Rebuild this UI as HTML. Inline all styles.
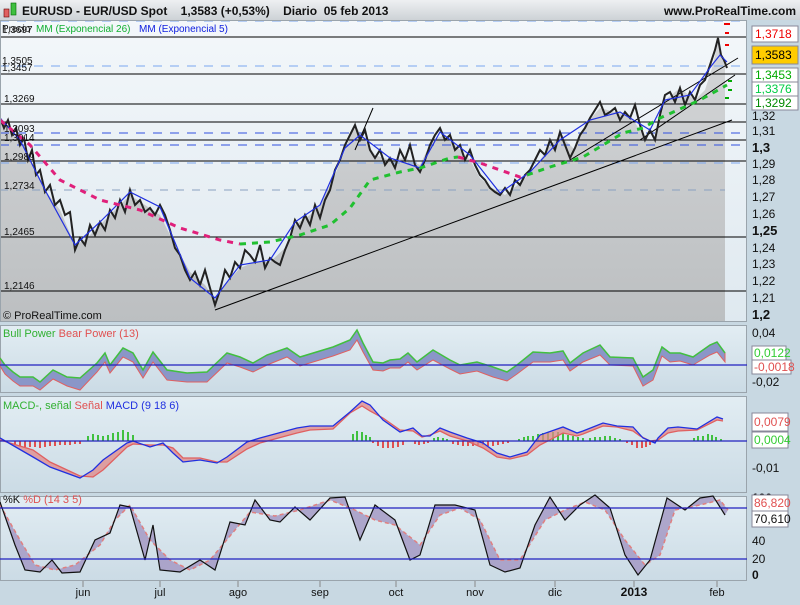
<!DOCTYPE html>
<html><head><meta charset="utf-8"><style>
body{margin:0;width:800px;height:600px;overflow:hidden;background:#c8d8e2;font-family:"Liberation Sans",sans-serif;}
svg text{font-family:"Liberation Sans",sans-serif;}
</style></head><body>
<svg width="800" height="600" xmlns="http://www.w3.org/2000/svg">
<defs>
<linearGradient id="hd" x1="0" y1="0" x2="0" y2="1"><stop offset="0" stop-color="#eef0f2"/><stop offset="1" stop-color="#cdd2d6"/></linearGradient>
<linearGradient id="pb" x1="0" y1="0" x2="0" y2="1"><stop offset="0" stop-color="#f3f7fa"/><stop offset="1" stop-color="#dfe9f0"/></linearGradient>
<linearGradient id="ib" x1="0" y1="0" x2="0" y2="1"><stop offset="0" stop-color="#e2edf3"/><stop offset="1" stop-color="#cbdbe5"/></linearGradient>
<linearGradient id="gf" x1="0" y1="0" x2="0" y2="1"><stop offset="0" stop-color="#d4d6d8"/><stop offset="1" stop-color="#bcbfc1"/></linearGradient>
</defs>
<rect width="800" height="600" fill="#c8d8e2"/>
<rect x="0" y="0" width="800" height="20" fill="url(#hd)"/>
<rect x="4" y="9" width="5" height="8" fill="#e06060" stroke="#600" stroke-width="0.6"/>
<rect x="11" y="3" width="5" height="12" fill="#40c040" stroke="#060" stroke-width="0.6"/>
<text x="22" y="15" font-size="12" font-weight="bold" fill="#111">EURUSD - EUR/USD Spot &#160;&#160; 1,3583 (+0,53%) &#160;&#160; Diario &#160;05 feb 2013</text>
<text x="796" y="15" font-size="12" font-weight="bold" fill="#111" text-anchor="end">www.ProRealTime.com</text>
<!-- main panel -->
<rect x="0" y="20" width="747" height="302" fill="url(#pb)"/>
<path d="M0,118 L8,125 20,140 30,160 45,190 60,210 75,245 85,240 100,225 115,210 130,195 145,205 160,215 175,245 190,272 205,285 215,300 225,285 240,268 255,262 270,262 285,248 295,225 310,215 320,205 335,175 345,150 355,125 365,140 375,155 390,160 405,158 420,165 432,140 445,135 460,150 470,160 480,178 492,188 505,195 520,183 535,168 548,148 560,135 575,150 585,125 600,108 615,112 630,115 645,138 655,140 665,100 680,88 695,100 705,90 712,68 718,42 722,55 725,68 L725,322 L0,322 Z" fill="url(#gf)"/>
<g stroke="#3050e0" stroke-width="1" stroke-dasharray="9,8">
<line x1="0" y1="133" x2="747" y2="133"/><line x1="0" y1="145" x2="747" y2="145"/>
</g>
<g stroke="#7aa6f0" stroke-width="1" stroke-dasharray="9,8">
<line x1="0" y1="21" x2="747" y2="21"/><line x1="0" y1="66" x2="747" y2="66"/><line x1="0" y1="163" x2="747" y2="163"/>
</g>
<g stroke="#000" stroke-width="1">
<line x1="0" y1="37" x2="747" y2="37"/><line x1="0" y1="74" x2="747" y2="74"/><line x1="0" y1="104" x2="747" y2="104"/><line x1="0" y1="122" x2="747" y2="122"/><line x1="0" y1="140" x2="747" y2="140"/><line x1="0" y1="161" x2="747" y2="161"/><line x1="0" y1="237" x2="747" y2="237"/><line x1="0" y1="291" x2="747" y2="291"/>
<line x1="215" y1="310" x2="732" y2="120"/><line x1="570" y1="160" x2="738" y2="58"/><line x1="640" y1="140" x2="735" y2="75"/><line x1="355" y1="150" x2="373" y2="108"/>
</g>
<g stroke="#8aa0c0" stroke-width="1" stroke-dasharray="8,8"><line x1="0" y1="190" x2="725" y2="190"/></g>
<path d="M0,118 L4,128 8,120 12,135 16,128 20,145 24,138 28,160 32,150 36,175 40,170 45,192 50,185 55,205 60,200 65,215 70,212 75,250 80,238 85,245 90,225 95,235 100,222 105,230 110,210 115,218 120,200 125,212 130,190 135,205 140,200 145,212 150,208 155,215 160,205 165,215 170,230 175,248 180,255 185,270 190,280 195,272 200,285 205,270 210,288 215,305 220,290 225,270 230,278 235,262 240,268 245,250 250,255 255,262 260,245 265,268 270,258 275,262 280,265 285,250 290,238 295,220 300,228 305,215 310,225 315,205 320,218 325,200 330,190 335,170 340,160 345,145 350,135 355,125 360,140 365,130 370,150 375,158 380,150 385,165 390,158 395,168 400,150 405,160 410,145 415,165 420,172 425,160 430,145 435,135 440,128 445,140 450,135 455,150 460,145 465,160 470,150 475,165 480,175 485,180 490,188 495,192 500,195 505,188 510,195 515,180 520,185 525,175 530,170 535,160 540,150 545,155 550,140 555,150 560,132 565,145 570,158 575,148 580,135 585,128 590,118 595,110 600,102 605,115 610,112 615,108 620,120 625,112 630,118 635,105 640,125 645,140 650,130 655,140 660,115 665,95 670,92 675,102 680,88 685,105 690,92 695,100 700,85 705,80 710,65 715,50 718,38 721,55 724,60 727,68" fill="none" stroke="#222" stroke-width="2"/>
<path d="M0,118 L20,140 45,190 75,245 100,222 130,192 160,207 190,278 215,298 240,265 270,260 295,222 320,205 345,148 360,135 390,158 420,168 440,132 470,155 500,193 530,172 560,140 590,120 620,112 650,130 665,100 690,95 712,65 720,55 727,62" fill="none" stroke="#2030e0" stroke-width="1.2"/>
<path d="M0,120 L30,145 60,180 100,200 140,210 180,228 220,240 240,244" fill="none" stroke="#e0207a" stroke-width="3" stroke-dasharray="6,6"/>
<path d="M240,244 L270,242 300,235 330,225 350,208 370,180 400,172 420,168 450,158 458,157" fill="none" stroke="#20c030" stroke-width="3" stroke-dasharray="6,6"/>
<path d="M458,157 L480,163 500,170 520,177 527,175" fill="none" stroke="#e0207a" stroke-width="3" stroke-dasharray="6,6"/>
<path d="M527,175 L550,167 583,157 623,133 643,128 660,118 700,100 727,85" fill="none" stroke="#20c030" stroke-width="3" stroke-dasharray="6,6"/>
<g stroke="#e00" stroke-width="2"><line x1="724" y1="24" x2="730" y2="24"/><line x1="725" y1="33" x2="729" y2="33"/><line x1="725" y1="45" x2="729" y2="45"/></g>
<g stroke="#0a0" stroke-width="2"><line x1="728" y1="81" x2="732" y2="81"/><line x1="728" y1="90" x2="732" y2="90"/><line x1="725" y1="98" x2="729" y2="98"/></g>
<g font-size="10" fill="#111">
<text x="2" y="33" fill="#111">1,3697</text><text x="2" y="64">1,3505</text><text x="2" y="71">1,3457</text><text x="4" y="102">1,3269</text><text x="4" y="132">1,3093</text><text x="4" y="141">1,3014</text><text x="4" y="160">1,2989</text><text x="4" y="189">1,2734</text><text x="4" y="235">1,2465</text><text x="4" y="289">1,2146</text>
<text x="2" y="32">Precio</text><text x="36" y="32" fill="#10b030">MM (Exponencial 26)</text><text x="139" y="32" fill="#1020e0">MM (Exponencial 5)</text>
<text x="3" y="319" font-size="11">© ProRealTime.com</text>
</g>
<rect x="0.5" y="20.5" width="746" height="301" fill="none" stroke="#9aa4ac"/>
<g font-size="12" fill="#111">
<text x="752" y="120">1,32</text><text x="752" y="135">1,31</text><text x="752" y="152" font-weight="bold" font-size="13">1,3</text><text x="752" y="168">1,29</text><text x="752" y="184">1,28</text><text x="752" y="201">1,27</text><text x="752" y="218">1,26</text><text x="752" y="235" font-weight="bold" font-size="13">1,25</text><text x="752" y="252">1,24</text><text x="752" y="268">1,23</text><text x="752" y="285">1,22</text><text x="752" y="302">1,21</text><text x="752" y="319" font-weight="bold" font-size="13">1,2</text>
</g>
<rect x="752" y="26" width="46" height="16" fill="#fff" stroke="#889"/><text x="755" y="38" font-size="12" fill="#e00">1,3718</text>
<rect x="752" y="46" width="46" height="18" fill="#ffcc00" stroke="#889"/><text x="755" y="59" font-size="12" fill="#000">1,3583</text>
<rect x="752" y="68" width="46" height="14" fill="#fff" stroke="#889"/><text x="755" y="79" font-size="12" fill="#0a0">1,3453</text>
<rect x="752" y="82" width="46" height="14" fill="#fff" stroke="#889"/><text x="755" y="93" font-size="12" fill="#0c4">1,3376</text>
<rect x="752" y="96" width="46" height="14" fill="#fff" stroke="#889"/><text x="755" y="107" font-size="12" fill="#080">1,3292</text>
<!-- bull/bear panel -->
<rect x="0.5" y="325.5" width="746" height="67" fill="url(#ib)" stroke="#9aa4ac"/>
<path d="M0,358 5,365 13,372 20,377 33,377 40,382 53,370 67,377 80,378 97,363 105,353 110,365 123,348 133,353 143,370 153,352 167,370 187,373 207,372 227,353 240,357 253,363 267,355 287,348 300,357 333,347 350,340 357,330 363,343 373,362 383,363 390,360 400,359 408,353 417,362 433,350 450,360 460,365 477,362 493,367 507,372 517,365 533,352 550,353 563,351 570,363 583,353 600,345 610,357 633,358 643,377 653,370 662,347 670,353 680,353 693,357 710,345 717,342 725,353 L725,362 717,352 710,355 693,365 680,361 670,362 662,356 653,380 643,386 633,366 610,365 600,355 583,362 570,371 563,360 550,362 533,362 517,374 507,381 493,377 477,371 460,374 450,369 433,360 417,370 408,362 400,368 390,368 383,371 373,370 363,352 357,340 350,350 333,356 300,366 287,357 267,365 253,372 240,367 227,363 207,382 187,382 167,380 153,362 143,378 133,362 123,357 110,373 105,362 97,372 80,390 67,386 53,379 40,390 33,386 20,386 13,381 5,374 0,366 Z" fill="#8a96c8" stroke="#e06060" stroke-width="1"/>
<path d="M0,358 5,365 13,372 20,377 33,377 40,382 53,370 67,377 80,378 97,363 105,353 110,365 123,348 133,353 143,370 153,352 167,370 187,373 207,372 227,353 240,357 253,363 267,355 287,348 300,357 333,347 350,340 357,330 363,343 373,362 383,363 390,360 400,359 408,353 417,362 433,350 450,360 460,365 477,362 493,367 507,372 517,365 533,352 550,353 563,351 570,363 583,353 600,345 610,357 633,358 643,377 653,370 662,347 670,353 680,353 693,357 710,345 717,342 725,353" fill="none" stroke="#40c040" stroke-width="1.5"/>
<line x1="0" y1="365" x2="747" y2="365" stroke="#2020c0" stroke-width="1.2"/>
<text x="3" y="337" font-size="11" fill="#30b030">Bull Power <tspan fill="#e05050">Bear Power (13)</tspan></text>
<g font-size="12" fill="#111"><text x="752" y="337">0,04</text><text x="752" y="386">-0,02</text></g>
<rect x="752" y="346" width="34" height="14" fill="#fff" stroke="#889"/><text x="754" y="357" font-size="12" fill="#3c3">0,0122</text>
<rect x="752" y="360" width="39" height="14" fill="#fff" stroke="#889"/><text x="754" y="371" font-size="12" fill="#e05050">-0,0018</text>
<!-- MACD -->
<rect x="0.5" y="396.5" width="746" height="96" fill="url(#ib)" stroke="#9aa4ac"/>
<g stroke="#40c040" stroke-width="2"><path d="M88,441v-5M93,441v-7M98,441v-6M103,441v-5M108,441v-6M113,441v-8M118,441v-9M123,441v-11M128,441v-9M133,441v-6M353,441v-7M357,441v-10M362,441v-9M366,441v-6M370,441v-4M434,441v-3M438,441v-4M443,441v-3M447,441v-2M519,441v-2M524,441v-4M528,441v-5M533,441v-5M538,441v-7M543,441v-8M548,441v-9M553,441v-9M558,441v-9M563,441v-8M568,441v-6M573,441v-5M578,441v-4M583,441v-3M590,441v-3M595,441v-4M600,441v-4M605,441v-5M610,441v-5M615,441v-3M620,441v-2M694,441v-3M698,441v-5M703,441v-5M708,441v-7M712,441v-6M716,441v-4M721,441v-2"/></g>
<g stroke="#e05050" stroke-width="2"><path d="M15,441v3M20,441v5M25,441v6M30,441v6M35,441v6M40,441v7M45,441v6M50,441v5M55,441v5M60,441v4M65,441v4M70,441v4M75,441v3M80,441v3M373,441v2M378,441v5M383,441v7M388,441v7M393,441v7M398,441v6M403,441v4M415,441v3M419,441v4M424,441v3M428,441v2M453,441v3M458,441v4M463,441v5M468,441v5M473,441v5M478,441v4M483,441v4M488,441v5M493,441v5M498,441v4M503,441v3M508,441v2M627,441v2M632,441v4M637,441v7M642,441v7M646,441v6M650,441v4"/></g>
<path d="M0,438 L33,457 50,467 80,478 93,470 103,460 127,443 133,441 150,447 163,443 173,453 183,462 200,460 217,463 227,457 247,442 260,438 297,428 310,426 333,426 350,412 362,401 370,405 383,420 400,432 413,428 422,436 430,436 440,428 450,432 467,438 483,443 497,453 510,457 527,452 540,435 563,427 577,433 583,431 603,423 617,426 633,427 643,438 655,443 658,438 668,428 678,427 697,429 717,417 723,419 L723,421 717,420 697,430 678,431 668,433 658,440 650,441 640,436 633,431 617,427 603,426 583,434 577,436 563,433 540,445 527,455 510,459 497,457 483,448 467,441 450,436 440,431 430,435 422,437 413,431 400,430 383,418 370,411 362,406 350,413 333,429 310,430 297,433 260,443 247,449 227,462 217,462 200,458 183,458 173,448 163,445 150,445 133,444 127,447 103,470 93,477 80,476 50,462 33,450 0,440 Z" fill="#e08888" opacity="0.75"/>
<path d="M0,440 L33,450 50,462 80,476 93,477 103,470 127,447 133,444 150,445 163,445 173,448 183,458 200,458 217,462 227,462 247,449 260,443 297,433 310,430 333,429 350,413 362,406 370,411 383,418 400,430 413,431 422,437 430,435 440,431 450,436 467,441 483,448 497,457 510,459 527,455 540,445 563,433 577,436 583,434 603,426 617,427 633,431 640,436 650,441 658,440 668,433 678,431 697,430 717,420 723,421" fill="none" stroke="#e06060" stroke-width="1.3"/>
<path d="M0,438 L33,457 50,467 80,478 93,470 103,460 127,443 133,441 150,447 163,443 173,453 183,462 200,460 217,463 227,457 247,442 260,438 297,428 310,426 333,426 350,412 362,401 370,405 383,420 400,432 413,428 422,436 430,436 440,428 450,432 467,438 483,443 497,453 510,457 527,452 540,435 563,427 577,433 583,431 603,423 617,426 633,427 643,438 655,443 658,438 668,428 678,427 697,429 717,417 723,419" fill="none" stroke="#2030e0" stroke-width="1.3"/>
<line x1="0" y1="441" x2="747" y2="441" stroke="#2020c0" stroke-width="1.2"/>
<text x="3" y="409" font-size="11" fill="#30b030">MACD-, señal <tspan fill="#e05050">Señal</tspan> <tspan fill="#2030e0">MACD (9 18 6)</tspan></text>
<rect x="752" y="413" width="36" height="18" fill="#fff" stroke="#889"/><text x="754" y="426" font-size="12" fill="#e05050">0,0079</text>
<rect x="752" y="432" width="36" height="16" fill="#fff" stroke="#889"/><text x="754" y="444" font-size="12" fill="#3c3">0,0004</text>
<text x="752" y="472" font-size="12" fill="#111">-0,01</text>
<!-- Stoch -->
<rect x="0.5" y="496.5" width="746" height="84" fill="url(#ib)" stroke="#9aa4ac"/>
<path d="M0,502 L15,545 25,570 40,572 52,560 62,573 80,572 95,540 110,533 120,505 130,507 145,560 153,525 160,570 180,572 200,560 215,570 230,522 245,525 255,500 270,520 280,522 295,507 310,520 330,498 345,497 360,540 375,505 395,520 410,560 420,555 435,505 455,505 475,510 490,565 505,572 520,568 535,525 550,497 565,520 580,505 595,495 610,508 625,555 638,575 650,560 667,498 685,510 700,498 713,496 725,515 L728,510 720,500 700,505 675,510 660,555 645,565 625,540 605,510 585,502 565,510 545,520 520,560 500,560 480,520 460,508 440,515 420,545 395,525 375,520 355,510 330,500 300,510 275,516 250,512 235,530 210,560 190,570 170,560 150,540 130,505 115,520 100,545 75,565 55,570 35,565 20,540 0,505 Z" fill="#a49ac4" opacity="0.85"/>
<path d="M0,505 L20,540 35,565 55,570 75,565 100,545 115,520 130,505 150,540 170,560 190,570 210,560 235,530 250,512 275,516 300,510 330,500 355,510 375,520 395,525 420,545 440,515 460,508 480,520 500,560 520,560 545,520 565,510 585,502 605,510 625,540 645,565 660,555 675,510 700,505 720,500 728,510" fill="none" stroke="#e08080" stroke-width="1.5" stroke-dasharray="4,3"/>
<path d="M0,502 L15,545 25,570 40,572 52,560 62,573 80,572 95,540 110,533 120,505 130,507 145,560 153,525 160,570 180,572 200,560 215,570 230,522 245,525 255,500 270,520 280,522 295,507 310,520 330,498 345,497 360,540 375,505 395,520 410,560 420,555 435,505 455,505 475,510 490,565 505,572 520,568 535,525 550,497 565,520 580,505 595,495 610,508 625,555 638,575 650,560 667,498 685,510 700,498 713,496 725,515" fill="none" stroke="#111" stroke-width="1.2"/>
<line x1="0" y1="508" x2="747" y2="508" stroke="#2020c0" stroke-width="1.2"/>
<line x1="0" y1="559" x2="747" y2="559" stroke="#2020c0" stroke-width="1.2"/>
<text x="3" y="503" font-size="11" fill="#111">%K <tspan fill="#e05050">%D (14 3 5)</tspan></text>
<g font-size="12" fill="#111"><text x="752" y="502" font-weight="bold">100</text><text x="752" y="527">60</text><text x="752" y="545">40</text><text x="752" y="563">20</text><text x="752" y="579" font-weight="bold">0</text></g>
<rect x="752" y="495" width="36" height="16" fill="#fff" stroke="#889"/><text x="754" y="507" font-size="12" fill="#e05050">86,820</text>
<rect x="752" y="511" width="36" height="16" fill="#fff" stroke="#889"/><text x="754" y="523" font-size="12" fill="#111">70,610</text>
<g stroke="#888"><path d="M83,581v6M160,581v6M238,581v6M320,581v6M396,581v6M475,581v6M555,581v6M634,581v6M717,581v6"/></g>
<g font-size="11" fill="#111" text-anchor="middle"><text x="83" y="596">jun</text><text x="160" y="596">jul</text><text x="238" y="596">ago</text><text x="320" y="596">sep</text><text x="396" y="596">oct</text><text x="475" y="596">nov</text><text x="555" y="596">dic</text><text x="634" y="596" font-weight="bold" font-size="12">2013</text><text x="717" y="596">feb</text></g>
</svg>
</body></html>
